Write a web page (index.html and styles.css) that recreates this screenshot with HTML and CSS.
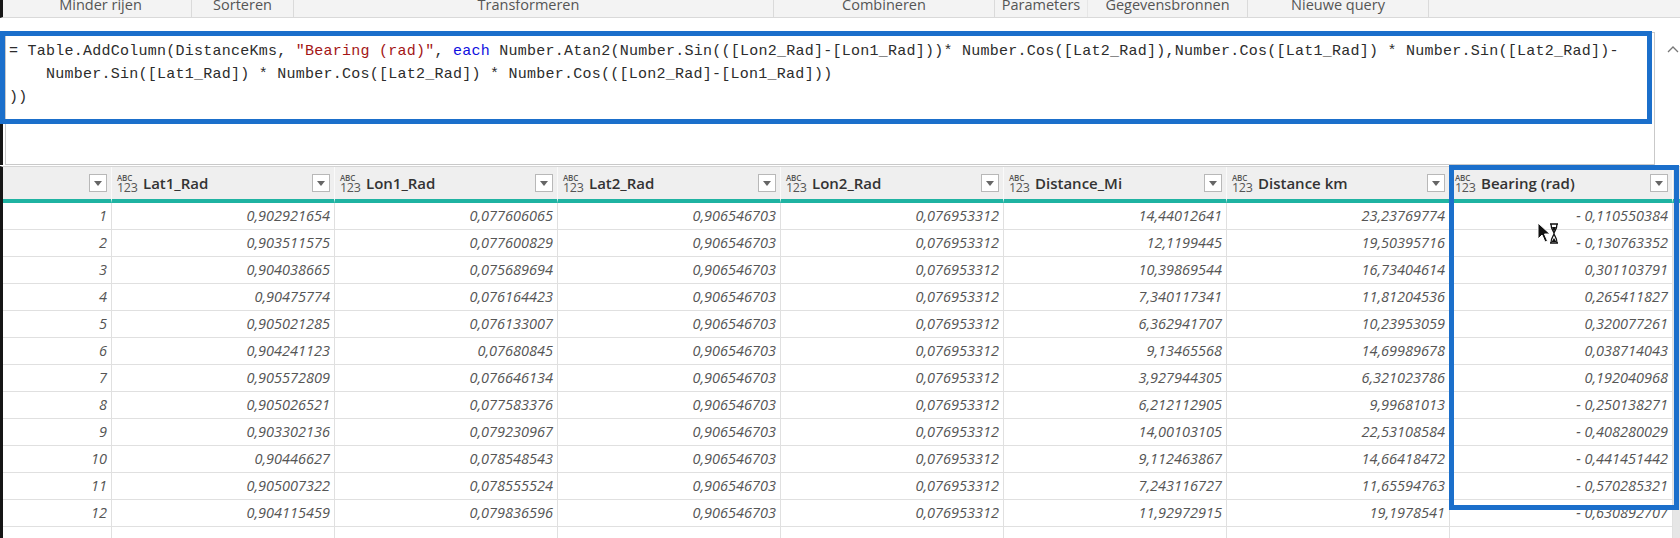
FILE: index.html
```html
<!DOCTYPE html>
<html>
<head>
<meta charset="utf-8">
<title>Power Query</title>
<link rel="stylesheet" href="styles.css">
</head>
<body>
<div class="app">
  <div class="ribbon">
    <div class="grp g-a">Minder rijen</div>
    <div class="grp g-b">Sorteren</div>
    <div class="grp g-c">Transformeren</div>
    <div class="grp g-d">Combineren</div>
    <div class="grp g-e">Parameters</div>
    <div class="grp g-f">Gegevensbronnen</div>
    <div class="grp g-g">Nieuwe query</div>
  </div>

  <div class="formula-area">
    <div class="formula-bar">
      <div class="code"><div class="ln">= Table.AddColumn(DistanceKms, <span class="str">"Bearing (rad)"</span>, <span class="kw">each</span> Number.Atan2(Number.Sin(([Lon2_Rad]-[Lon1_Rad]))* Number.Cos([Lat2_Rad]),Number.Cos([Lat1_Rad]) * Number.Sin([Lat2_Rad])-</div><div class="ln">    Number.Sin([Lat1_Rad]) * Number.Cos([Lat2_Rad]) * Number.Cos(([Lon2_Rad]-[Lon1_Rad]))</div><div class="ln">))</div></div>
    </div>
    <div class="formula-side">
      <svg class="caret" width="12" height="8" viewBox="0 0 12 8"><path d="M1 7 L6 2 L11 7" fill="none" stroke="#777" stroke-width="1.3"/></svg>
    </div>
    <div class="annot annot-formula"></div>
  </div>

  <div class="table">
    <div class="hc hc-num"><span class="dd"><svg width="8" height="5" viewBox="0 0 8 5"><path d="M0 0 H8 L4 5 Z" fill="#666"/></svg></span></div>
    <div class="hc"><span class="ti"><i>ABC</i><b>123</b></span><span class="lbl">Lat1_Rad</span><span class="dd"><svg width="8" height="5" viewBox="0 0 8 5"><path d="M0 0 H8 L4 5 Z" fill="#666"/></svg></span></div>
    <div class="hc"><span class="ti"><i>ABC</i><b>123</b></span><span class="lbl">Lon1_Rad</span><span class="dd"><svg width="8" height="5" viewBox="0 0 8 5"><path d="M0 0 H8 L4 5 Z" fill="#666"/></svg></span></div>
    <div class="hc"><span class="ti"><i>ABC</i><b>123</b></span><span class="lbl">Lat2_Rad</span><span class="dd"><svg width="8" height="5" viewBox="0 0 8 5"><path d="M0 0 H8 L4 5 Z" fill="#666"/></svg></span></div>
    <div class="hc"><span class="ti"><i>ABC</i><b>123</b></span><span class="lbl">Lon2_Rad</span><span class="dd"><svg width="8" height="5" viewBox="0 0 8 5"><path d="M0 0 H8 L4 5 Z" fill="#666"/></svg></span></div>
    <div class="hc"><span class="ti"><i>ABC</i><b>123</b></span><span class="lbl">Distance_Mi</span><span class="dd"><svg width="8" height="5" viewBox="0 0 8 5"><path d="M0 0 H8 L4 5 Z" fill="#666"/></svg></span></div>
    <div class="hc"><span class="ti"><i>ABC</i><b>123</b></span><span class="lbl">Distance km</span><span class="dd"><svg width="8" height="5" viewBox="0 0 8 5"><path d="M0 0 H8 L4 5 Z" fill="#666"/></svg></span></div>
    <div class="hc"><span class="ti"><i>ABC</i><b>123</b></span><span class="lbl">Bearing (rad)</span><span class="dd"><svg width="8" height="5" viewBox="0 0 8 5"><path d="M0 0 H8 L4 5 Z" fill="#666"/></svg></span></div>
    <div class="hc hc-scroll"></div>

    <div class="c n">1</div><div class="c">0,902921654</div><div class="c">0,077606065</div><div class="c">0,906546703</div><div class="c">0,076953312</div><div class="c">14,44012641</div><div class="c">23,23769774</div><div class="c">- 0,110550384</div><div class="sb"></div>
    <div class="c n">2</div><div class="c">0,903511575</div><div class="c">0,077600829</div><div class="c">0,906546703</div><div class="c">0,076953312</div><div class="c">12,1199445</div><div class="c">19,50395716</div><div class="c">- 0,130763352</div><div class="sb"></div>
    <div class="c n">3</div><div class="c">0,904038665</div><div class="c">0,075689694</div><div class="c">0,906546703</div><div class="c">0,076953312</div><div class="c">10,39869544</div><div class="c">16,73404614</div><div class="c">0,301103791</div><div class="sb"></div>
    <div class="c n">4</div><div class="c">0,90475774</div><div class="c">0,076164423</div><div class="c">0,906546703</div><div class="c">0,076953312</div><div class="c">7,340117341</div><div class="c">11,81204536</div><div class="c">0,265411827</div><div class="sb"></div>
    <div class="c n">5</div><div class="c">0,905021285</div><div class="c">0,076133007</div><div class="c">0,906546703</div><div class="c">0,076953312</div><div class="c">6,362941707</div><div class="c">10,23953059</div><div class="c">0,320077261</div><div class="sb"></div>
    <div class="c n">6</div><div class="c">0,904241123</div><div class="c">0,07680845</div><div class="c">0,906546703</div><div class="c">0,076953312</div><div class="c">9,13465568</div><div class="c">14,69989678</div><div class="c">0,038714043</div><div class="sb"></div>
    <div class="c n">7</div><div class="c">0,905572809</div><div class="c">0,076646134</div><div class="c">0,906546703</div><div class="c">0,076953312</div><div class="c">3,927944305</div><div class="c">6,321023786</div><div class="c">0,192040968</div><div class="sb"></div>
    <div class="c n">8</div><div class="c">0,905026521</div><div class="c">0,077583376</div><div class="c">0,906546703</div><div class="c">0,076953312</div><div class="c">6,212112905</div><div class="c">9,99681013</div><div class="c">- 0,250138271</div><div class="sb"></div>
    <div class="c n">9</div><div class="c">0,903302136</div><div class="c">0,079230967</div><div class="c">0,906546703</div><div class="c">0,076953312</div><div class="c">14,00103105</div><div class="c">22,53108584</div><div class="c">- 0,408280029</div><div class="sb"></div>
    <div class="c n">10</div><div class="c">0,90446627</div><div class="c">0,078548543</div><div class="c">0,906546703</div><div class="c">0,076953312</div><div class="c">9,112463867</div><div class="c">14,66418472</div><div class="c">- 0,441451442</div><div class="sb"></div>
    <div class="c n">11</div><div class="c">0,905007322</div><div class="c">0,078555524</div><div class="c">0,906546703</div><div class="c">0,076953312</div><div class="c">7,243116727</div><div class="c">11,65594763</div><div class="c">- 0,570285321</div><div class="sb"></div>
    <div class="c n">12</div><div class="c">0,904115459</div><div class="c">0,079836596</div><div class="c">0,906546703</div><div class="c">0,076953312</div><div class="c">11,92972915</div><div class="c">19,1978541</div><div class="c">- 0,630892707</div><div class="sb"></div>
    <div class="c n"></div><div class="c"></div><div class="c"></div><div class="c"></div><div class="c"></div><div class="c"></div><div class="c"></div><div class="c"></div><div class="sb"></div>
  </div>

  <div class="annot annot-col"></div>

  <svg class="cursor" width="22" height="24" viewBox="0 0 22 24">
    <path d="M1 1 L1 17 L5 13 L8 20 L10.5 19 L7.5 12 L13 12 Z" fill="#111" stroke="#fff" stroke-width="1"/>
    <g fill="none" stroke="#111" stroke-width="1.3">
      <path d="M13 2 H21 M13 21 H21"/>
      <path d="M14 2 C14 8 17 9 17 11.5 C17 14 14 15 14 21 M20 2 C20 8 17 9 17 11.5 C17 14 20 15 20 21"/>
    </g>
    <path d="M15 5 H19 L17 10 Z M14.5 20 L17 16 L19.5 20 Z" fill="#111"/>
  </svg>
</div>
</body>
</html>
```

FILE: styles.css
```css
* { box-sizing: border-box; }

html, body {
  margin: 0;
  padding: 0;
  background: #ffffff;
}

.app {
  position: relative;
  width: 1680px;
  height: 538px;
  overflow: hidden;
  background: #ffffff;
  font-family: "Open Sans", "Noto Sans", sans-serif;
}

/* ---------- ribbon ---------- */
.ribbon {
  display: flex;
  height: 18px;
  background: #f3f3f3;
  border-bottom: 1px solid #d9d9d9;
  border-left: 3px solid #161616;
  padding-left: 7px;
}

.grp {
  font-size: 14.5px;
  line-height: 14px;
  color: #555;
  text-align: center;
  margin-top: -2px;
  border-right: 1px solid #dadada;
  height: 19px;
  white-space: nowrap;
}

.g-a { width: 182px; }
.g-b { width: 102px; }
.g-c { width: 480px; padding-right: 10px; }
.g-d { width: 221px; }
.g-e { width: 93px; border-right-color: #e6e6e6; }
.g-f { width: 160px; }
.g-g { width: 181px; }

/* ---------- formula ---------- */
.formula-area {
  position: relative;
  display: flex;
  margin-top: 14px;
  height: 133px;
  border-left: 3px solid #161616;
}

.formula-bar {
  margin-left: 2px;
  width: 1650px;
  height: 133px;
  border: 1px solid #c9c9c9;
  background: #fff;
}

.code {
  padding: 7px 0 0 3px;
  font-family: "Liberation Mono", "DejaVu Sans Mono", monospace;
  font-size: 15px;
  letter-spacing: 0.25px;
  line-height: 23px;
  color: #2c2c2c;
  white-space: pre;
}

.str { color: #a31515; }
.kw { color: #1010e0; }

.formula-side {
  flex: 1;
  padding: 13px 0 0 12px;
}

.caret { display: block; }

.annot {
  position: absolute;
  border: 5px solid #1b6fcb;
  pointer-events: none;
}

.annot-formula {
  left: -3px;
  top: -1px;
  width: 1652px;
  height: 93px;
}

/* ---------- table ---------- */
.table {
  display: grid;
  grid-template-columns: 109px repeat(7, 223px) 1fr;
  grid-auto-rows: 27px;
  grid-template-rows: 36px;
  margin-top: 1px;
  border-left: 3px solid #161616;
  border-top: 1px solid #d4d4d4;
}

.hc {
  display: flex;
  align-items: center;
  background: #efefef;
  border-bottom: 4px solid #1fb3a2;
  border-right: 1px solid #fafafa;
  padding-left: 5px;
}

.hc-num { justify-content: flex-end; }
.hc-scroll { background: #e6e6e6; border-right: none; }

.ti {
  display: flex;
  flex-direction: column;
  align-items: flex-start;
  color: #555;
  width: 16px;
  margin-top: 1px;
}

.ti i {
  font-style: normal;
  font-size: 8px;
  line-height: 8px;
  letter-spacing: -0.2px;
  font-weight: 600;
}

.ti b {
  font-weight: 400;
  font-size: 12.5px;
  line-height: 11px;
  letter-spacing: -0.3px;
}

.lbl {
  margin-left: 10px;
  font-size: 15px;
  font-weight: 600;
  color: #333;
  white-space: nowrap;
}

.dd {
  margin-left: auto;
  margin-right: 4px;
  width: 18px;
  height: 18px;
  border: 1px solid #b8b8b8;
  background: #fff;
  display: flex;
  align-items: center;
  justify-content: center;
}

.c {
  border-right: 1px solid #e0e0e0;
  border-bottom: 1px solid #e0e0e0;
  text-align: right;
  padding-right: 4px;
  font-size: 14.5px;
  font-style: italic;
  line-height: 26px;
  color: #555;
  white-space: nowrap;
}

.sb {
  background: #e6e6e6;
}

.annot-col {
  left: 1449px;
  top: 165px;
  width: 230px;
  height: 345px;
}

.cursor {
  position: absolute;
  left: 1537px;
  top: 222px;
}
```
